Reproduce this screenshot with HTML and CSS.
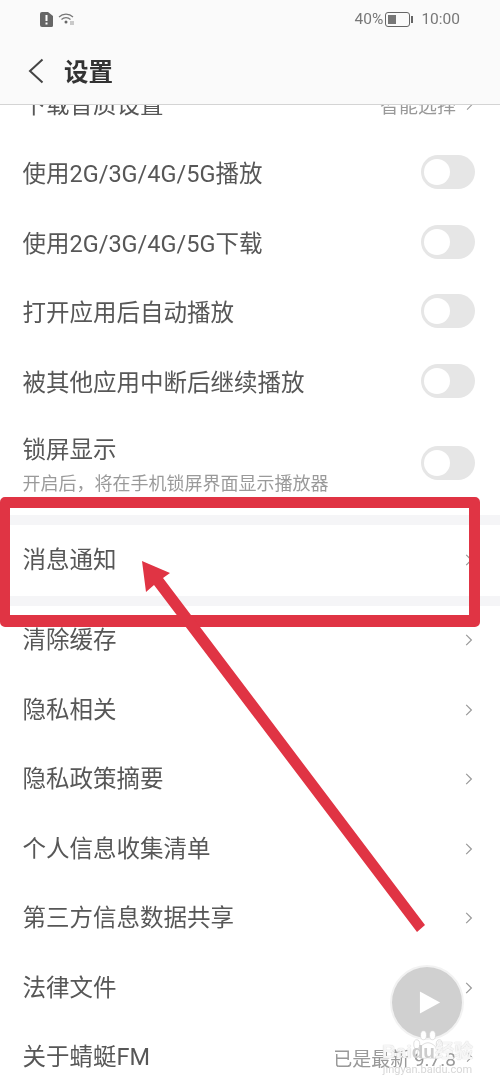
FILE: index.html
```html
<!DOCTYPE html>
<html lang="zh-CN">
<head>
    <meta charset="UTF-8">
    <meta name="viewport" content="width=device-width, initial-scale=1.0">
    <title>设置</title>
    <link rel="stylesheet" href="styles.css">
</head>
<body>
    <div class="phone">
        <header class="top">
            <div class="status-bar">
                <div class="status-left">
                    <svg class="sim-icon" viewBox="0 0 13 15"><path d="M2 0h6l5 4v9.500a1.500 1.500 0 0 1-1.500 1.500h-9.500a2 2 0 0 1-2-2v-11a2 2 0 0 1 2-2z" fill="#666"/><rect x="5.500" y="3" width="2" height="6" fill="#fff"/><rect x="5.500" y="10.500" width="2" height="2" fill="#fff"/></svg>
                    <svg class="wifi-icon" viewBox="0 0 18 14"><path d="M1 5a10 10 0 0 1 14 0M3.500 7.500a6.500 6.500 0 0 1 9 0" fill="none" stroke="#777" stroke-width="1.200"/><circle cx="8" cy="10" r="1.500" fill="#666"/><path d="M13 9v4M15 9v4" stroke="#999" stroke-width="1"/></svg>
                </div>
                <div class="status-right">
                    <span>40%</span>
                    <span class="battery"><span class="battery-level"></span></span>
                    <span class="battery-tip"></span>
                    <span class="clock">10:00</span>
                </div>
            </div>
            <div class="title-bar">
                <svg class="back-icon" viewBox="0 0 16 26"><path d="M14.500 1.500L2 13l12.500 11.500" fill="none" stroke="#444" stroke-width="2"/></svg>
                <h1>设置</h1>
            </div>
        </header>

        <main class="content">
            <div class="list">
                <div class="row">
                    <span class="label">下载音质设置</span>
                    <span class="value">智能选择<svg class="arrow small" viewBox="0 0 10 16"><path d="M1.500 1.500L8 8l-6.500 6.500"/></svg></span>
                </div>
                <div class="row">
                    <span class="label">使用2G/3G/4G/5G播放</span>
                    <span class="switch"></span>
                </div>
                <div class="row">
                    <span class="label">使用2G/3G/4G/5G下载</span>
                    <span class="switch"></span>
                </div>
                <div class="row">
                    <span class="label">打开应用后自动播放</span>
                    <span class="switch"></span>
                </div>
                <div class="row">
                    <span class="label">被其他应用中断后继续播放</span>
                    <span class="switch"></span>
                </div>
                <div class="row row-tall">
                    <div>
                        <div class="label">锁屏显示</div>
                        <div class="hint">开启后，将在手机锁屏界面显示播放器</div>
                    </div>
                    <span class="switch"></span>
                </div>

                <div class="row row-single">
                    <span class="label">消息通知</span>
                    <svg class="arrow" viewBox="0 0 10 16"><path d="M1.500 1.500L8 8l-6.500 6.500"/></svg>
                </div>

                <div class="row">
                    <span class="label">清除缓存</span>
                    <svg class="arrow" viewBox="0 0 10 16"><path d="M1.500 1.500L8 8l-6.500 6.500"/></svg>
                </div>
                <div class="row">
                    <span class="label">隐私相关</span>
                    <svg class="arrow" viewBox="0 0 10 16"><path d="M1.500 1.500L8 8l-6.500 6.500"/></svg>
                </div>
                <div class="row">
                    <span class="label">隐私政策摘要</span>
                    <svg class="arrow" viewBox="0 0 10 16"><path d="M1.500 1.500L8 8l-6.500 6.500"/></svg>
                </div>
                <div class="row">
                    <span class="label">个人信息收集清单</span>
                    <svg class="arrow" viewBox="0 0 10 16"><path d="M1.500 1.500L8 8l-6.500 6.500"/></svg>
                </div>
                <div class="row">
                    <span class="label">第三方信息数据共享</span>
                    <svg class="arrow" viewBox="0 0 10 16"><path d="M1.500 1.500L8 8l-6.500 6.500"/></svg>
                </div>
                <div class="row">
                    <span class="label">法律文件</span>
                    <svg class="arrow" viewBox="0 0 10 16"><path d="M1.500 1.500L8 8l-6.500 6.500"/></svg>
                </div>
                <div class="row">
                    <span class="label">关于蜻蜓FM</span>
                    <span class="value">已是最新 9.7.8<svg class="arrow small" viewBox="0 0 10 16"><path d="M1.500 1.500L8 8l-6.500 6.500"/></svg></span>
                </div>
            </div>
        </main>

        <!-- annotation drawn over the screenshot -->
        <div class="mark-box"></div>
        <svg class="mark-arrow" viewBox="0 0 500 1084">
            <path d="M142 561L170 573L163 578L425 925L417 932L154 585L146 592Z" fill="#e03444"/>
        </svg>

        <div class="play-btn">
            <svg viewBox="0 0 24 26"><path d="M1 1L23 13L1 25Z" fill="#fff"/></svg>
        </div>

        <div class="watermark">
            <svg class="paw" viewBox="0 0 40 40">
                <g fill="#fff" stroke="#d4d4d4" stroke-width="1">
                    <ellipse cx="5" cy="19" rx="4" ry="6"/>
                    <ellipse cx="14" cy="7" rx="4" ry="6"/>
                    <ellipse cx="26" cy="7" rx="4" ry="6"/>
                    <ellipse cx="35" cy="19" rx="4" ry="6"/>
                    <path d="M20 17c7 0 15 9 14 16c-1 6-9 5-14 4c-5 1-13 2-14-4c-1-7 7-16 14-16z"/>
                </g>
            </svg>
            <div class="watermark-text">Bai<span class="du">du</span>经验</div>
            <div class="watermark-url">jingyan.baidu.com</div>
        </div>
    </div>
</body>
</html>
```

FILE: styles.css
```css
* {
    margin: 0;
    padding: 0;
    box-sizing: border-box;
}

html, body {
    height: 100%;
    overflow: hidden;
}

body {
    font-family: Roboto, "Noto Sans CJK SC", sans-serif;
    background: #fff;
}

.phone {
    position: relative;
    display: flex;
    flex-direction: column;
    width: 500px;
    height: 1084px;
    overflow: hidden;
    filter: blur(0.4px);
}

.top {
    flex: none;
    height: 105px;
    background: #fafafa;
    border-bottom: 1px solid #d4d4d4;
    position: relative;
    z-index: 1;
}

.status-bar {
    display: flex;
    justify-content: space-between;
    align-items: center;
    height: 38px;
    padding: 0 40px;
}

.status-left {
    display: flex;
    align-items: center;
    gap: 5px;
}

.sim-icon {
    width: 13px;
    height: 15px;
}

.wifi-icon {
    width: 18px;
    height: 14px;
}

.status-right {
    display: flex;
    align-items: center;
    font-size: 15.500px;
    color: #777;
}

.battery {
    display: block;
    width: 25px;
    height: 15px;
    margin-left: 2px;
    padding: 2px;
    border: 1.500px solid #666;
    border-radius: 3px;
}

.battery-level {
    display: block;
    width: 8px;
    height: 100%;
    background: #777;
}

.battery-tip {
    display: block;
    width: 2px;
    height: 7px;
    margin-left: 1px;
    background: #666;
}

.clock {
    margin-left: 8px;
}

.title-bar {
    display: flex;
    align-items: center;
    height: 66px;
    padding-left: 28px;
}

.back-icon {
    width: 16px;
    height: 26px;
}

.title-bar h1 {
    margin-left: 20px;
    margin-bottom: 2px;
    font-size: 24.500px;
    font-weight: 700;
    color: #333;
}

.content {
    flex: 1;
    overflow: hidden;
}

.list {
    margin-top: -35px;
}

.row {
    display: flex;
    justify-content: space-between;
    align-items: center;
    height: 69.500px;
    padding: 0 25px 0 22.500px;
    background: #fff;
}

.row-tall {
    box-sizing: content-box;
    height: 95px;
    padding-bottom: 2px;
    border-bottom: 10px solid #f5f5f7;
}

.row-single {
    box-sizing: content-box;
    height: 71px;
    border-bottom: 10px solid #f5f5f7;
}

.label {
    font-size: 23.500px;
    line-height: 32px;
    color: #575757;
}

.hint {
    margin-top: 6px;
    font-size: 18px;
    line-height: 24px;
    color: #9a9a9a;
}

.value {
    display: flex;
    align-items: center;
    gap: 10px;
    font-size: 19px;
    color: #999;
}

.switch {
    position: relative;
    display: block;
    width: 54px;
    height: 34px;
    margin-bottom: 4px;
    border-radius: 17px;
    background: #e6e6e6;
}

.switch::after {
    content: "";
    position: absolute;
    left: 3px;
    top: 4px;
    width: 26px;
    height: 26px;
    border-radius: 50%;
    background: #fff;
}

.arrow {
    width: 8px;
    height: 14px;
    margin-right: 2px;
}

.arrow path {
    fill: none;
    stroke: #999;
    stroke-width: 1.500;
}

.arrow.small {
    width: 7px;
    height: 12px;
}

.mark-box {
    position: absolute;
    left: 0;
    top: 497px;
    width: 480px;
    height: 130px;
    border-style: solid;
    border-color: #e03444;
    border-width: 11px 11px 12px 10px;
    border-radius: 5px;
}

.mark-arrow {
    position: absolute;
    left: 0;
    top: 0;
    width: 500px;
    height: 1084px;
}

.play-btn {
    position: absolute;
    left: 390px;
    top: 965px;
    display: flex;
    align-items: center;
    justify-content: center;
    width: 74px;
    height: 75px;
    padding-left: 5px;
    border: 2px solid #f2f2f2;
    border-radius: 50%;
    background: #d0d0d0;
}

.play-btn svg {
    width: 22px;
    height: 25px;
}

.watermark {
    position: absolute;
    left: 370px;
    top: 1030px;
    width: 115px;
    text-align: center;
}

.paw {
    display: block;
    width: 30px;
    height: 30px;
    margin: 0 auto -19px;
}

.watermark-text {
    position: relative;
    font-size: 19px;
    line-height: 22px;
    color: rgba(255, 255, 255, 0.85);
    font-family: "Liberation Sans", "Noto Sans CJK SC", sans-serif;
    font-weight: 700;
    text-shadow: 0 0 1px #bbb;
}

.watermark-text .du {
    color: #ccc;
    text-shadow: none;
}

.watermark-url {
    font-size: 11px;
    line-height: 14px;
    color: rgba(205, 205, 205, 0.8);
}
```
